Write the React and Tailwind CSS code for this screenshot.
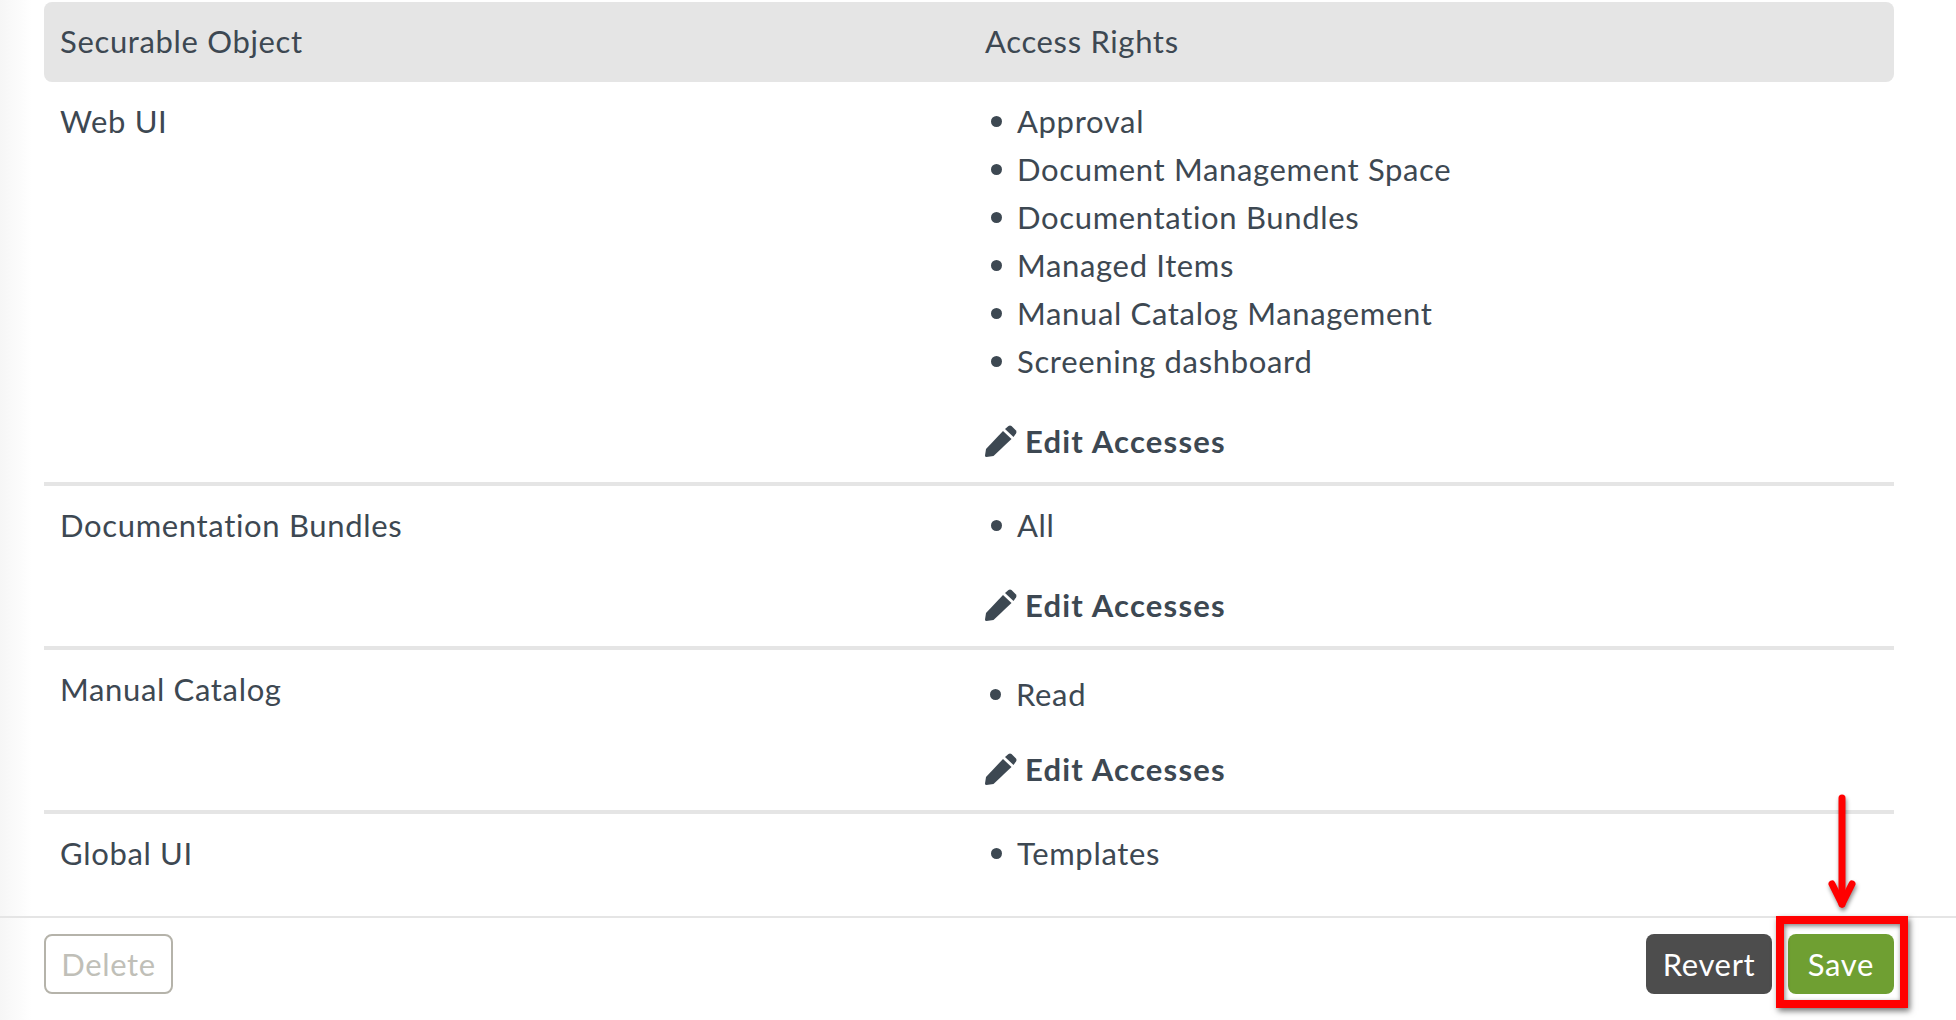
import React from "react";

const rows = [
  {
    name: "Web UI",
    rights: [
      "Approval",
      "Document Management Space",
      "Documentation Bundles",
      "Managed Items",
      "Manual Catalog Management",
      "Screening dashboard",
    ],
    edit: true,
  },
  { name: "Documentation Bundles", rights: ["All"], edit: true },
  { name: "Manual Catalog", rights: ["Read"], edit: true, shifted: true },
  { name: "Global UI", rights: ["Templates"], edit: false },
];

const PencilIcon = () => (
  <svg className="w-8 h-8 mr-2 shrink-0" viewBox="0 0 32 32" fill="#3d4852">
    <path d="M1 24L18 6L26.5 14L8.5 31L1.5 32Q0 32 0 30.5Z" />
    <path d="M20 4L23.5 1Q25 0 26.5 1L31 5.5Q32 7 31 8.5L28.5 12Z" />
  </svg>
);

const Row = ({ row }) => (
  <div className={`flex px-4 pt-[15px] ${row.edit ? "pb-[17px] border-b-4 border-[#e5e5e5]" : ""}`}>
    <div className="w-[925px] shrink-0">{row.name}</div>
    <div className="flex-1">
      <ul className={row.shifted ? "mt-[5px] mb-[-5px] -ml-px" : ""}>
        {row.rights.map((right) => (
          <li key={right} className="flex items-center">
            <span className="w-[11px] h-[11px] rounded-full bg-[#3d4852] ml-[6px] mr-[15px]" />
            {right}
          </li>
        ))}
      </ul>
      {row.edit && (
        <div className="flex items-center mt-8 font-bold tracking-[1.2px]">
          <PencilIcon />
          Edit Accesses
        </div>
      )}
    </div>
  </div>
);

export default function App() {
  return (
    <div className="relative h-[1020px] overflow-hidden bg-white flex flex-col font-['Lato',sans-serif] text-[31px] tracking-[0.66px] leading-[48px] text-[#3d4852]">
      <div className="absolute inset-y-0 left-0 w-8 bg-gradient-to-r from-[#f6f6f6] to-white" />

      <div className="relative flex-1 pt-[2px] pl-11 pr-[62px]">
        <div className="flex items-center h-20 px-4 pb-[2px] bg-[#e5e5e5] rounded-lg">
          <div className="w-[925px] shrink-0">Securable Object</div>
          <div>Access Rights</div>
        </div>
        {rows.map((row) => (
          <Row key={row.name} row={row} />
        ))}
      </div>

      <div className="relative flex items-start justify-between h-[104px] pt-4 pl-11 pr-[62px] border-t-2 border-[#e5e5e5]">
        <button className="w-[129px] h-[60px] rounded-lg border-2 border-[#b5b3aa] text-[#c0bfb8]">Delete</button>
        <div className="flex gap-4">
          <button className="w-[126px] h-[60px] rounded-lg bg-[#4d4d4d] text-white">Revert</button>
          <button className="w-[106px] h-[60px] rounded-lg bg-[#6f9f32] text-white">Save</button>
        </div>
      </div>

      {/* annotation drawn on top of the screenshot */}
      <div className="absolute left-[1776px] top-[916px] w-[132px] h-[92px] border-8 border-[#ff0000] shadow-[2px_3px_6px_rgba(0,0,0,0.55),inset_1px_2px_5px_rgba(0,0,0,0.5)]" />
      <svg className="absolute left-[1822px] top-[790px] drop-shadow-[1px_3px_2px_rgba(0,0,0,0.45)]" width="40" height="126" viewBox="0 0 40 126" fill="none">
        <path d="M20 8V114" stroke="#ff0000" strokeWidth="7" strokeLinecap="round" />
        <path d="M10 94L20 114L30 94" stroke="#ff0000" strokeWidth="7" strokeLinecap="round" strokeLinejoin="round" />
      </svg>
    </div>
  );
}
